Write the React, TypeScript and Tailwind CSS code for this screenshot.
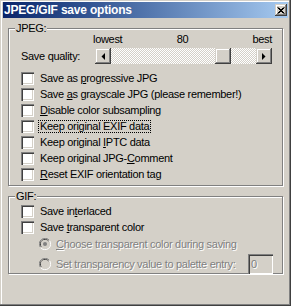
import React from "react";

const checkBox =
  "block w-[13px] h-[13px] shrink-0 bg-white shadow-[inset_1px_1px_#808080,inset_2px_2px_#404040,inset_-1px_-1px_#fff,inset_-2px_-2px_#d4d0c8]";
const raised =
  "shadow-[inset_-1px_-1px_#404040,inset_1px_1px_#d4d0c8,inset_-2px_-2px_#808080,inset_2px_2px_#fff]";

function Check({ children, focus = false }: { children: React.ReactNode; focus?: boolean }) {
  return (
    <div className="flex items-center h-[16px]">
      <span className={checkBox}></span>
      {focus ? (
        <span className="ml-[4px] px-[1px] leading-[11px] border border-dotted border-black">{children}</span>
      ) : (
        <span className="ml-[6px]">{children}</span>
      )}
    </div>
  );
}

function Radio({ checked }: { checked?: boolean }) {
  return (
    <svg width="12" height="12" viewBox="0 0 12 12" className="shrink-0">
      <path d="M10.5 2.5 A5.5 5.5 0 0 0 1.5 9.5" fill="none" stroke="#808080" strokeWidth="1" />
      <path d="M9.6 3.2 A4.5 4.5 0 0 0 2.4 8.8" fill="none" stroke="#404040" strokeWidth="1" />
      <path d="M10.5 2.5 A5.5 5.5 0 0 1 1.5 9.5" fill="none" stroke="#ffffff" strokeWidth="1" />
      <circle cx="6" cy="6" r="4" fill="#d4d0c8" />
      {checked && <circle cx="6" cy="6" r="2" fill="#808080" />}
    </svg>
  );
}

function Arrow({ dir }: { dir: "l" | "r" }) {
  return (
    <span className={`w-[16px] h-[16px] shrink-0 bg-[#d4d0c8] flex items-center justify-center ${raised}`}>
      <svg width="4" height="7" viewBox="0 0 4 7">
        {dir === "l" ? <polygon points="4,0 4,7 0.5,3.5" fill="#000" /> : <polygon points="0,0 0,7 3.5,3.5" fill="#000" />}
      </svg>
    </span>
  );
}

export default function App() {
  return (
    <div className="w-[291px] h-[306px] overflow-hidden bg-[#d4d0c8] font-['Liberation_Sans',Arial,sans-serif] text-[11px] leading-[13px] tracking-[-0.3px] text-black pt-[2px] px-[3px] shadow-[inset_-1px_-1px_#404040,inset_-2px_-2px_#808080,inset_1px_1px_#d4d0c8,inset_2px_2px_#fff]">
      {/* Title bar */}
      <div className="h-[16px] flex items-center justify-between bg-linear-to-r from-[#0a246a] to-[#a6caf0] pl-[1px] pr-[1px]">
        <span className="font-bold text-white text-[12px] leading-[16px] tracking-[-0.2px]">JPEG/GIF save options</span>
        <span className={`w-[12px] h-[12px] bg-[#d4d0c8] flex items-center justify-center ${raised}`}>
          <svg width="8" height="7" viewBox="0 0 8 7">
            <path d="M0.5 0.5 L6.5 6.5 M1.5 0.5 L7.5 6.5 M6.5 0.5 L0.5 6.5 M7.5 0.5 L1.5 6.5" stroke="#000" strokeWidth="1" />
          </svg>
        </span>
      </div>

      {/* JPEG group */}
      <div className="relative mt-[10px] ml-[5px] w-[275px] h-[158px] border border-[#808080] shadow-[inset_1px_1px_#fff,1px_1px_#fff] pl-[12px]">
        <span className="absolute top-[-7px] left-[6px] px-[1px] bg-[#d4d0c8]">JPEG:</span>
        <div className="grid grid-cols-3 w-[179px] ml-[72px] mt-[4px] h-[13px]">
          <span className="text-left">lowest</span>
          <span className="text-center">80</span>
          <span className="text-right">best</span>
        </div>
        <div className="flex items-center mt-[2px] h-[16px]">
          <span className="w-[74px]">Save quality:</span>
          <div className="flex w-[177px] h-[16px]">
            <Arrow dir="l" />
            <span className="w-[104px] h-[16px] bg-[repeating-conic-gradient(#ffffff_0_25%,#d4d0c8_0_50%)] [background-size:2px_2px]"></span>
            <span className={`w-[16px] h-[16px] bg-[#d4d0c8] ${raised}`}></span>
            <span className="flex-1 h-[16px] bg-[repeating-conic-gradient(#ffffff_0_25%,#d4d0c8_0_50%)] [background-size:2px_2px]"></span>
            <Arrow dir="r" />
          </div>
        </div>
        <div className="mt-[6px] flex flex-col">
          <Check>Save as <u>p</u>rogressive JPG</Check>
          <Check>Save <u>a</u>s grayscale JPG (please remember!)</Check>
          <Check><u>D</u>isable color subsampling</Check>
          <Check focus>Keep original EXIF data</Check>
          <Check>Keep original <u>I</u>PTC data</Check>
          <Check>Keep original JPG-<u>C</u>omment</Check>
          <Check><u>R</u>eset EXIF orientation tag</Check>
        </div>
      </div>

      {/* GIF group */}
      <div className="relative mt-[10px] ml-[5px] w-[275px] h-[78px] border border-[#808080] shadow-[inset_1px_1px_#fff,1px_1px_#fff] pl-[12px]">
        <span className="absolute top-[-7px] left-[6px] px-[1px] bg-[#d4d0c8]">GIF:</span>
        <div className="mt-[6px] flex flex-col">
          <Check>Save in<u>t</u>erlaced</Check>
          <Check>Save <u>t</u>ransparent color</Check>
        </div>
        <div className="ml-[18px] text-[#808080] [text-shadow:1px_1px_#fff]">
          <div className="flex items-center h-[16px] mt-[1px]">
            <Radio checked />
            <span className="ml-[5px]"><u>C</u>hoose transparent color during saving</span>
          </div>
          <div className="flex items-center h-[20px] mt-[2px]">
            <Radio />
            <span className="ml-[5px]">Set transparency value to palette entry:</span>
            <span className="ml-auto mr-[9px] w-[25px] h-[20px] pl-[3px] flex items-center shadow-[inset_1px_1px_#808080,inset_2px_2px_#404040,inset_-1px_-1px_#fff,inset_-2px_-2px_#d4d0c8]">0</span>
          </div>
        </div>
      </div>
    </div>
  );
}
